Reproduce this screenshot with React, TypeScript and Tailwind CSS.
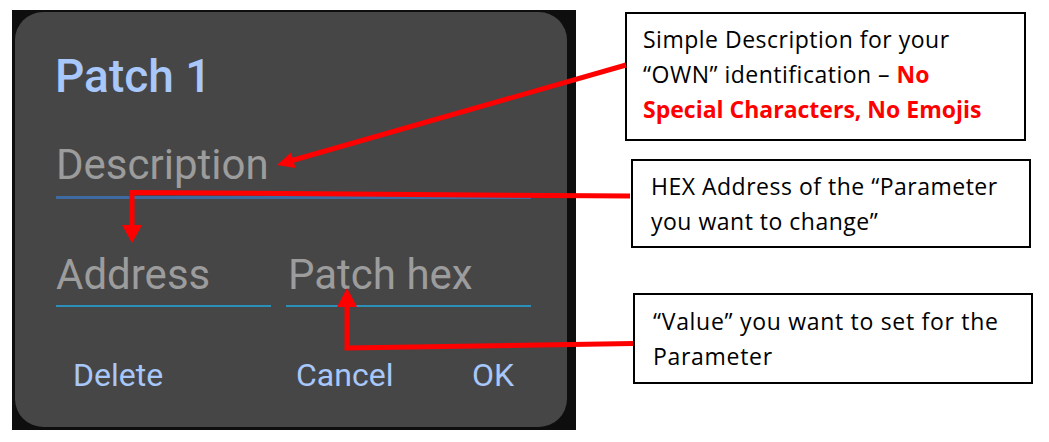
const DIALOG_FONT = { fontFamily: 'Roboto, "Noto Sans", sans-serif' };
const NOTE_FONT = { fontFamily: '"Open Sans", Lato, sans-serif' };

function PatchDialog() {
  return (
    <div className="ml-[12px] mt-[10px] w-[564px] h-[420px] bg-[#0e0e0e] pl-[3px] pt-[2px]">
      <div
        className="w-[552px] h-[415px] bg-[#464646] rounded-[28px] pl-[41px] pt-[41px] flex flex-col"
        style={DIALOG_FONT}
      >
        <h1 className="text-[46px] leading-none font-medium text-[#a8c7fa] -ml-[1px]">Patch 1</h1>

        <div className="mt-[45px] w-[475px] pb-[10px] border-b-[3px] border-[#3d6aa0]">
          <span className="block text-[42px] leading-none text-[#9c9c9c]">Description</span>
        </div>

        <div className="mt-[55px] flex gap-[15px]">
          <div className="w-[215px] pb-[9px] border-b-2 border-[#2b8fba]">
            <span className="block text-[42px] leading-none text-[#9c9c9c]">Address</span>
          </div>
          <div className="w-[245px] pb-[9px] border-b-2 border-[#2b8fba]">
            <span className="block pl-[2px] text-[42px] leading-none text-[#9c9c9c]">Patch hex</span>
          </div>
        </div>

        <div className="mt-[52px] ml-[17px] flex text-[32px] leading-none text-[#a8c7fa]">
          <button className="w-[223px] text-left">Delete</button>
          <button className="w-[176px] text-left">Cancel</button>
          <button className="text-left">OK</button>
        </div>
      </div>
    </div>
  );
}

function Notes() {
  return (
    <div
      className="ml-[49px] mt-[12px] flex flex-col text-[23px] leading-[35px] tracking-[0.5px] text-black"
      style={NOTE_FONT}
    >
      <div className="w-[401px] border-2 border-black pl-[16px] pt-[8px] pb-[12px] whitespace-nowrap">
        Simple Description for your
        <br />
        “OWN” identification – <span className="font-bold tracking-normal text-[#ff0000]">No</span>
        <br />
        <span className="font-bold tracking-normal text-[#ff0000]">Special Characters, No Emojis</span>
      </div>
      <div className="ml-[6px] mt-[18px] w-[400px] border-2 border-black pl-[18px] pt-[8px] pb-[7px] whitespace-nowrap">
        HEX Address of the “Parameter
        <br />
        you want to change”
      </div>
      <div className="ml-[8px] mt-[45px] w-[400px] border-2 border-black pl-[18px] pt-[9px] pb-[8px] whitespace-nowrap tracking-[0.7px]">
        “Value” you want to set for the
        <br />
        Parameter
      </div>
    </div>
  );
}

function Arrows() {
  // red callout arrows drawn over the screenshot
  return (
    <svg className="absolute inset-0 pointer-events-none" width="1049" height="442" viewBox="0 0 1049 442">
      <g fill="#ff0000" stroke="#ff0000" strokeWidth="5" strokeLinejoin="miter">
        <line x1="626" y1="65" x2="292" y2="160.5" />
        <polygon points="277,165 295.5,168 291.1,152.6" stroke="none" />

        <polyline points="630,196 132,192.5 132,227" fill="none" />
        <polygon points="122,225 142,225 132,243" stroke="none" />

        <polyline points="633,343.5 347,348 347,305" fill="none" />
        <polygon points="337,307 357,307 347,288" stroke="none" />
      </g>
    </svg>
  );
}

export default function App() {
  return (
    <div className="relative w-[1049px] h-[442px] bg-white overflow-hidden flex items-start">
      <PatchDialog />
      <Notes />
      <Arrows />
    </div>
  );
}
